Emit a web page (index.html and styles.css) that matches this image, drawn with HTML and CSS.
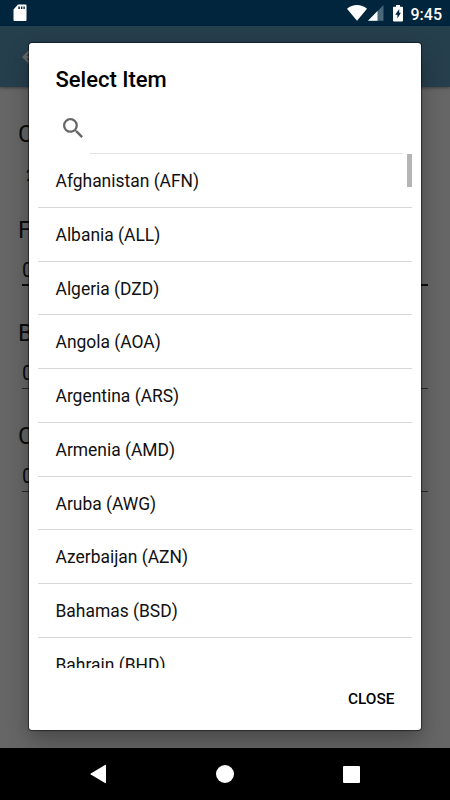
FILE: index.html
```
<!DOCTYPE html><html lang="en"><head><meta charset="utf-8"/>
<meta name="viewport" content="width=device-width, initial-scale=1.0"/>
<title>Select Item</title>
<link rel="stylesheet" href="styles.css">
</head>
<body>

<div class="statusbar">
  <svg class="sdcard" width="14" height="18" viewBox="0 0 14 18"><path fill="#fff" fill-rule="evenodd" d="M5 .5h7.500q1 0 1 1v14.500q0 1-1 1h-11q-1 0-1-1V5.500zM5.300 2.500v2.500h1.500v-2.500zM8 2.500v2.500h1.400v-2.500zM10.400 2.500v2.500h1.400v-2.500z"/></svg>
  <svg class="wifi" width="20" height="16" viewBox="0 0 20 16"><path fill="#fff" d="M0 3.700Q4.500 0 10 0t10 3.700L10 15.700z"/></svg>
  <svg class="signal" width="16" height="16" viewBox="0 0 16 16"><path fill="#486778" d="M15.500 0v15.700H0z"/><path fill="#fff" d="M9.500 6v9.700H0z"/></svg>
  <svg class="battery" width="10" height="17" viewBox="0 0 10 17"><path fill="#fff" fill-rule="evenodd" d="M3 0h4v1.700h2q1 0 1 1V15.500q0 1-1 1H1q-1 0-1-1V2.700q0-1 1-1h2zM6.200 4L2.200 9.800h2.200v3.700l3.500-5.800H6.200z"/></svg>
  <span class="clock">9:45</span>
</div>

<div class="appbar">
  <svg width="18" height="18" viewBox="4 4 16 16"><path fill="#686868" d="M20 11H7.830l5.590-5.590L12 4l-8 8 8 8 1.410-1.410L7.830 13H20z"/></svg>
</div>

<div class="page">
  <div class="field">
    <div class="label">C</div>
    <div class="value spinner">2</div>
  </div>
  <div class="field">
    <div class="label">F</div>
    <div class="value input focus">0</div>
  </div>
  <div class="field">
    <div class="label">B</div>
    <div class="value input">0</div>
  </div>
  <div class="field">
    <div class="label">C</div>
    <div class="value input">0</div>
  </div>
</div>

<div class="navbar">
  <svg width="16" height="20" viewBox="0 0 16 20"><path fill="#fff" d="M15 1q1-.5 1 .5v17q0 1-1 .5L.8 10.500q-.8-.5 0-1z"/></svg>
  <svg width="18" height="18" viewBox="0 0 18 18"><circle fill="#fff" cx="9" cy="9" r="9"/></svg>
  <svg width="17" height="17" viewBox="0 0 17 17"><rect fill="#fff" width="17" height="17" rx="1"/></svg>
</div>

<div class="dialog">
  <h1>Select Item</h1>
  <div class="search">
    <svg width="20" height="20" viewBox="3 3 17.500 17.500"><path fill="#666" d="M15.500 14h-.79l-.28-.27A6.471 6.471 0 0 0 16 9.500 6.500 6.500 0 1 0 9.500 16c1.610 0 3.090-.59 4.230-1.570l.27.28v.79l5 4.990L20.490 19l-4.990-5zm-6 0C7.010 14 5 11.990 5 9.500S7.010 5 9.500 5 14 7.010 14 9.500 11.990 14 9.500 14z"/></svg>
    <div class="query"></div>
  </div>
  <div class="list">
    <div class="item">Afghanistan (AFN)</div>
    <div class="item">Albania (ALL)</div>
    <div class="item">Algeria (DZD)</div>
    <div class="item">Angola (AOA)</div>
    <div class="item">Argentina (ARS)</div>
    <div class="item">Armenia (AMD)</div>
    <div class="item">Aruba (AWG)</div>
    <div class="item">Azerbaijan (AZN)</div>
    <div class="item">Bahamas (BSD)</div>
    <div class="item">Bahrain (BHD)</div>
    <div class="thumb"></div>
  </div>
  <div class="actions"><span class="close">CLOSE</span></div>
</div>

</body>
</html>
```
FILE: styles.css
```
* {
  box-sizing: border-box;
}
body {
  display: flex;
  flex-direction: column;
  position: relative;
  width: 450px;
  height: 800px;
  margin: 0;
  overflow: hidden;
  background: #666;
  color: #0c0c0c;
  font-family: Roboto, sans-serif;
}
svg {
  display: block;
  flex: none;
}
/* system bars */
.statusbar {
  display: flex;
  flex: none;
  align-items: flex-start;
  height: 26px;
  padding: 5px 8px 0 13px;
  background: #00253d;
}
.sdcard {
  margin-top: -1px;
}
.wifi {
  margin-left: auto;
}
.signal {
  margin-left: 1px;
}
.battery {
  margin-left: 9px;
}
.clock {
  margin-left: 8px;
  color: #fff;
  font-size: 16px;
  font-weight: 500;
  line-height: 19px;
}
.navbar {
  display: flex;
  flex: none;
  align-items: center;
  justify-content: space-between;
  height: 52px;
  padding: 0 90px;
  background: #000;
  position: relative;
  z-index: 2;
}
/* page under the dialog */
.appbar {
  display: flex;
  flex: none;
  align-items: center;
  height: 61px;
  padding-left: 22px;
  background: #263f4d;
  box-shadow: 0 1px 3px rgba(0, 0, 0, .4);
}
.page {
  flex: 1;
  padding: 31px 22px 0 18px;
}
.field {
  height: 103.200px;
}
.field:first-child {
  height: 96px;
}
.label {
  height: 32px;
  font-size: 24px;
  line-height: 32px;
}
.value {
  height: 40px;
  margin-left: 4px;
  padding-top: 12px;
  font-size: 20px;
  line-height: 24px;
}
.spinner {
  padding: 13px 0 0 4px;
  font-size: 17px;
}
.input {
  border-bottom: 1px solid #282828;
}
.focus {
  border-bottom: 2px solid #0c0c0c;
}
/* dialog */
.dialog {
  display: flex;
  flex-direction: column;
  position: absolute;
  z-index: 1;
  left: 29px;
  top: 43px;
  width: 392px;
  height: 687px;
  padding: 0 9px;
  border-radius: 3px;
  background: #fff;
  color: #111;
  box-shadow: 0 0 1px 1px rgba(0, 0, 0, .5), 0 10px 22px rgba(0, 0, 0, .3);
}
h1 {
  height: 72px;
  margin: 0;
  padding: 22px 0 0 17.500px;
  color: #000;
  font-size: 22px;
  font-weight: 500;
  line-height: 30px;
}
.search {
  display: flex;
  height: 39px;
  padding: 2.500px 9px 0 24.500px;
}
.query {
  flex: 1;
  margin-left: 7.500px;
  border-bottom: 1px solid #e3e3e3;
}
.list {
  position: relative;
  height: 514px;
  overflow: hidden;
}
.item {
  height: 53.780px;
  padding-left: 17.500px;
  border-bottom: 1px solid #d8d8d8;
  font-size: 17.450px;
  line-height: 54px;
}
.thumb {
  position: absolute;
  top: 0;
  right: 0;
  width: 5px;
  height: 33px;
  background: #b5b5b5;
}
.actions {
  display: flex;
  flex: 1;
  align-items: center;
  justify-content: flex-end;
  padding-right: 17.500px;
}
.close {
  color: #000;
  font-size: 15.400px;
  font-weight: 500;
}
```
